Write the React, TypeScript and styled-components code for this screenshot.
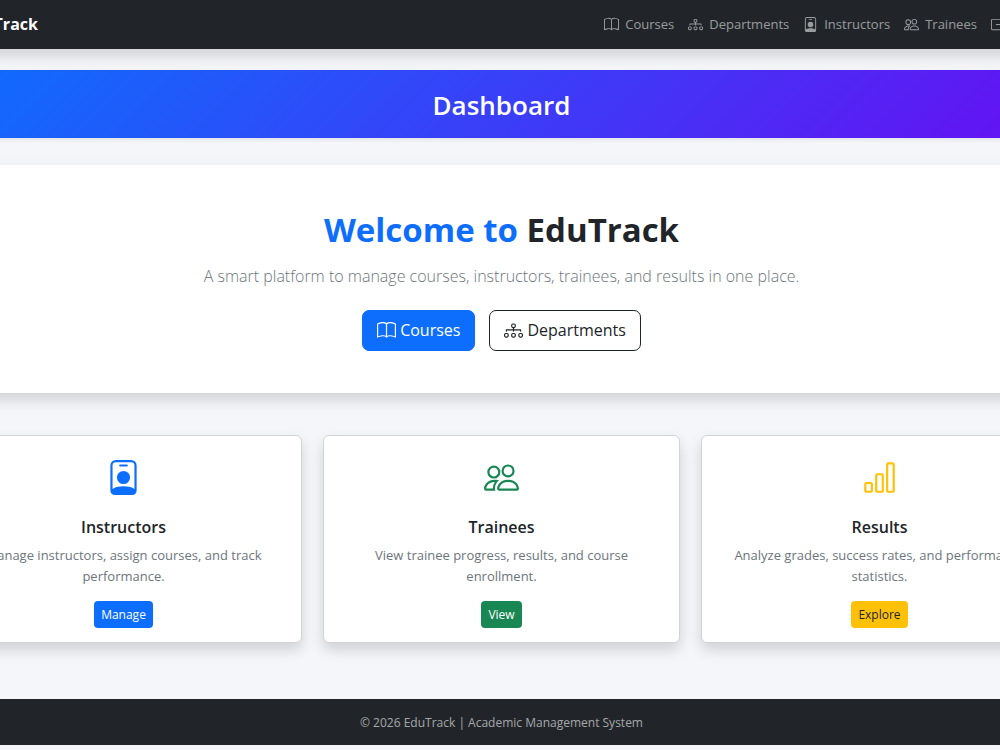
import React from 'react';
import styled, { createGlobalStyle } from 'styled-components';
import {
  BsBarChart,
  BsBook,
  BsBoxArrowRight,
  BsDiagram3,
  BsPeople,
  BsPersonBadge,
} from 'react-icons/bs';
import type { IconType } from 'react-icons';

const GlobalStyle = createGlobalStyle`
  *, *::before, *::after { box-sizing: border-box; }
  body {
    margin: 0;
    background: #f4f6fa;
    color: #212529;
    font-family: "Segoe UI", "Open Sans", "Noto Sans", sans-serif;
    font-size: 13px;
    line-height: 21px;
  }
  h1, h2, h3, p { margin: 0; }
  a { text-decoration: none; }
`;

const Viewport = styled.div`
  overflow: hidden;
`;

const Shell = styled.div`
  margin: 0 -58px 0 -55px;
`;

const Navbar = styled.nav`
  display: flex;
  align-items: center;
  justify-content: space-between;
  padding: 14px 4px 14px 19px;
  background: #212529;
  box-shadow: 0 7px 14px rgba(0, 0, 0, 0.15);
`;

const Brand = styled.a`
  color: #fff;
  font-size: 16px;
  font-weight: 700;
`;

const NavLinks = styled.div`
  display: flex;
  gap: 14px;
`;

const NavLink = styled.a`
  display: flex;
  align-items: center;
  gap: 6px;
  flex: none;
  color: rgba(255, 255, 255, 0.55);
`;

const Banner = styled.header`
  margin-top: 21px;
  padding: 18px 16px 16px;
  background: linear-gradient(135deg, #0d6efd, #6610f2);
  box-shadow: 0 2px 4px rgba(0, 0, 0, 0.08);
  color: #fff;
  text-align: center;
`;

const BannerTitle = styled.h1`
  font-size: 26px;
  font-weight: 600;
  line-height: 34px;
`;

const Hero = styled.section`
  display: flex;
  flex-direction: column;
  align-items: center;
  margin-top: 27px;
  padding: 44px 42px 42px;
  background: #fff;
  box-shadow: 0 7px 14px rgba(0, 0, 0, 0.15);
  text-align: center;
`;

const HeroTitle = styled.h2`
  font-size: 33px;
  font-weight: 700;
  line-height: 42px;
`;

const Accent = styled.span`
  color: #0d6efd;
`;

const Lead = styled.p`
  margin-top: 12px;
  color: #6c757d;
  font-size: 16px;
  font-weight: 300;
  line-height: 26px;
`;

const HeroActions = styled.div`
  display: flex;
  gap: 14px;
  margin-top: 21px;
`;

const HeroLink = styled.a<{ $filled?: boolean }>`
  display: flex;
  align-items: center;
  gap: 4px;
  height: 41px;
  padding: 0 14px;
  border: 1px solid ${(p) => (p.$filled ? '#0d6efd' : '#212529')};
  border-radius: 7px;
  background: ${(p) => (p.$filled ? '#0d6efd' : '#fff')};
  color: ${(p) => (p.$filled ? '#fff' : '#212529')};
  font-size: 16px;
`;

const Cards = styled.section`
  display: grid;
  grid-template-columns: repeat(3, 1fr);
  gap: 21px;
  margin-top: 42px;
`;

const Card = styled.article`
  display: flex;
  flex-direction: column;
  align-items: center;
  padding: 24px 24px 14px;
  border: 1px solid #d3d4d8;
  border-radius: 6px;
  background: #fff;
  box-shadow: 0 7px 14px rgba(0, 0, 0, 0.15);
  text-align: center;
`;

const CardIcon = styled.div<{ $color: string }>`
  display: flex;
  color: ${(p) => p.$color};
`;

const CardTitle = styled.h3`
  margin-top: 22px;
  font-size: 16px;
  font-weight: 600;
  line-height: 21px;
`;

const CardText = styled.p`
  margin-top: 7px;
  color: #6c757d;
`;

const CardLink = styled.a<{ $background: string; $color: string }>`
  margin-top: 14px;
  padding: 3px 7px;
  border-radius: 4px;
  background: ${(p) => p.$background};
  color: ${(p) => p.$color};
  font-size: 12px;
`;

const Footer = styled.footer`
  margin: 56px 0 5px;
  padding: 15px 14px 13px;
  background: #212529;
  color: rgba(255, 255, 255, 0.6);
  font-size: 12px;
  line-height: 18px;
  text-align: center;
`;

const navItems: { label: string; Icon: IconType }[] = [
  { label: 'Courses', Icon: BsBook },
  { label: 'Departments', Icon: BsDiagram3 },
  { label: 'Instructors', Icon: BsPersonBadge },
  { label: 'Trainees', Icon: BsPeople },
  { label: 'Logout', Icon: BsBoxArrowRight },
];

const cards: {
  title: string;
  text: string;
  action: string;
  color: string;
  actionColor: string;
  Icon: IconType;
}[] = [
  {
    title: 'Instructors',
    text: 'Manage instructors, assign courses, and track performance.',
    action: 'Manage',
    color: '#0d6efd',
    actionColor: '#fff',
    Icon: BsPersonBadge,
  },
  {
    title: 'Trainees',
    text: 'View trainee progress, results, and course enrollment.',
    action: 'View',
    color: '#198754',
    actionColor: '#fff',
    Icon: BsPeople,
  },
  {
    title: 'Results',
    text: 'Analyze grades, success rates, and performance statistics.',
    action: 'Explore',
    color: '#ffc107',
    actionColor: '#212529',
    Icon: BsBarChart,
  },
];

export default function App() {
  return (
    <>
      <GlobalStyle />
      <Viewport>
        <Shell>
          <Navbar>
            <Brand href="#home">EduTrack</Brand>
            <NavLinks>
              {navItems.map(({ label, Icon }) => (
                <NavLink key={label} href={`#${label.toLowerCase()}`}>
                  <Icon size={15} />
                  {label}
                </NavLink>
              ))}
            </NavLinks>
          </Navbar>
          <Banner>
            <BannerTitle>Dashboard</BannerTitle>
          </Banner>
          <main>
            <Hero>
              <HeroTitle>
                <Accent>Welcome to</Accent> EduTrack
              </HeroTitle>
              <Lead>
                A smart platform to manage courses, instructors, trainees, and results in one place.
              </Lead>
              <HeroActions>
                <HeroLink href="#courses" $filled>
                  <BsBook size={19} />
                  Courses
                </HeroLink>
                <HeroLink href="#departments">
                  <BsDiagram3 size={19} />
                  Departments
                </HeroLink>
              </HeroActions>
            </Hero>
            <Cards>
              {cards.map(({ title, text, action, color, actionColor, Icon }) => (
                <Card key={title}>
                  <CardIcon $color={color}>
                    <Icon size={35} />
                  </CardIcon>
                  <CardTitle>{title}</CardTitle>
                  <CardText>{text}</CardText>
                  <CardLink href={`#${title.toLowerCase()}`} $background={color} $color={actionColor}>
                    {action}
                  </CardLink>
                </Card>
              ))}
            </Cards>
          </main>
          <Footer>© 2026 EduTrack | Academic Management System</Footer>
        </Shell>
      </Viewport>
    </>
  );
}
